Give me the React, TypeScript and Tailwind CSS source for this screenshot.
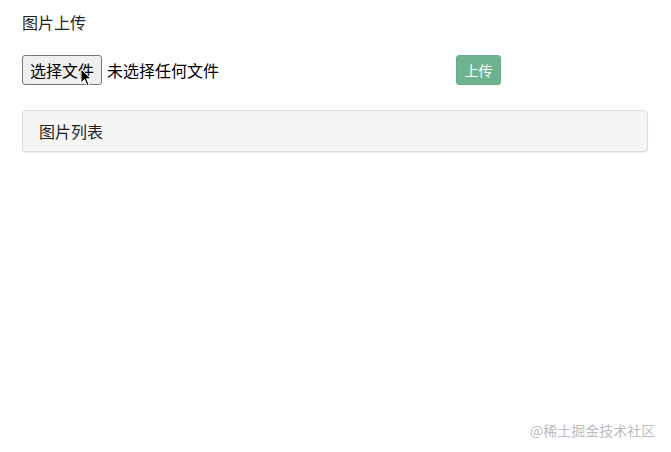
export default function App() {
  return (
    <div className="relative h-[452px] w-[671px] overflow-hidden bg-white font-['Noto_Sans_CJK_SC','Noto_Sans',sans-serif] text-[16px] text-[#222]">
      <div className="px-[22px] pt-[10px]">
        <h3 className="h-[24px] leading-[24px]">图片上传</h3>

        {/* upload row */}
        <div className="mt-[21px] flex items-center">
          <div className="flex w-[434px] items-center">
            <button className="h-[30px] w-[80px] rounded-[3px] border border-[#767676] bg-[#efefef] text-[16px] leading-none text-black">
              选择文件
            </button>
            <span className="ml-[5px] text-black">未选择任何文件</span>
          </div>
          <button className="h-[30px] w-[45px] rounded-[3px] border border-[#68ae89] bg-[#6db38f] text-[14px] text-white">
            上传
          </button>
        </div>

        {/* list panel */}
        <div className="mt-[25px] flex h-[42px] w-[626px] items-center rounded-[4px] border border-[#dddddd] bg-[#f5f5f5] px-[16px] shadow-[0_1px_1px_rgba(0,0,0,0.08)]">
          <span className="text-[#222]">图片列表</span>
        </div>
      </div>

      {/* mouse cursor */}
      <svg className="absolute left-[80px] top-[68px]" width="12" height="19" viewBox="0 0 12 19">
        <path d="M1 1 L1 15 L4.5 11.5 L7 17.5 L9 16.6 L6.6 10.8 L11 10.8 Z" fill="#000" stroke="#fff" strokeWidth="1" strokeLinejoin="round" />
      </svg>

      {/* watermark */}
      <div className="absolute left-[530px] top-[420px] text-[14px] leading-[20px] text-[#bcbcbc]">
        @稀土掘金技术社区
      </div>
    </div>
  );
}
